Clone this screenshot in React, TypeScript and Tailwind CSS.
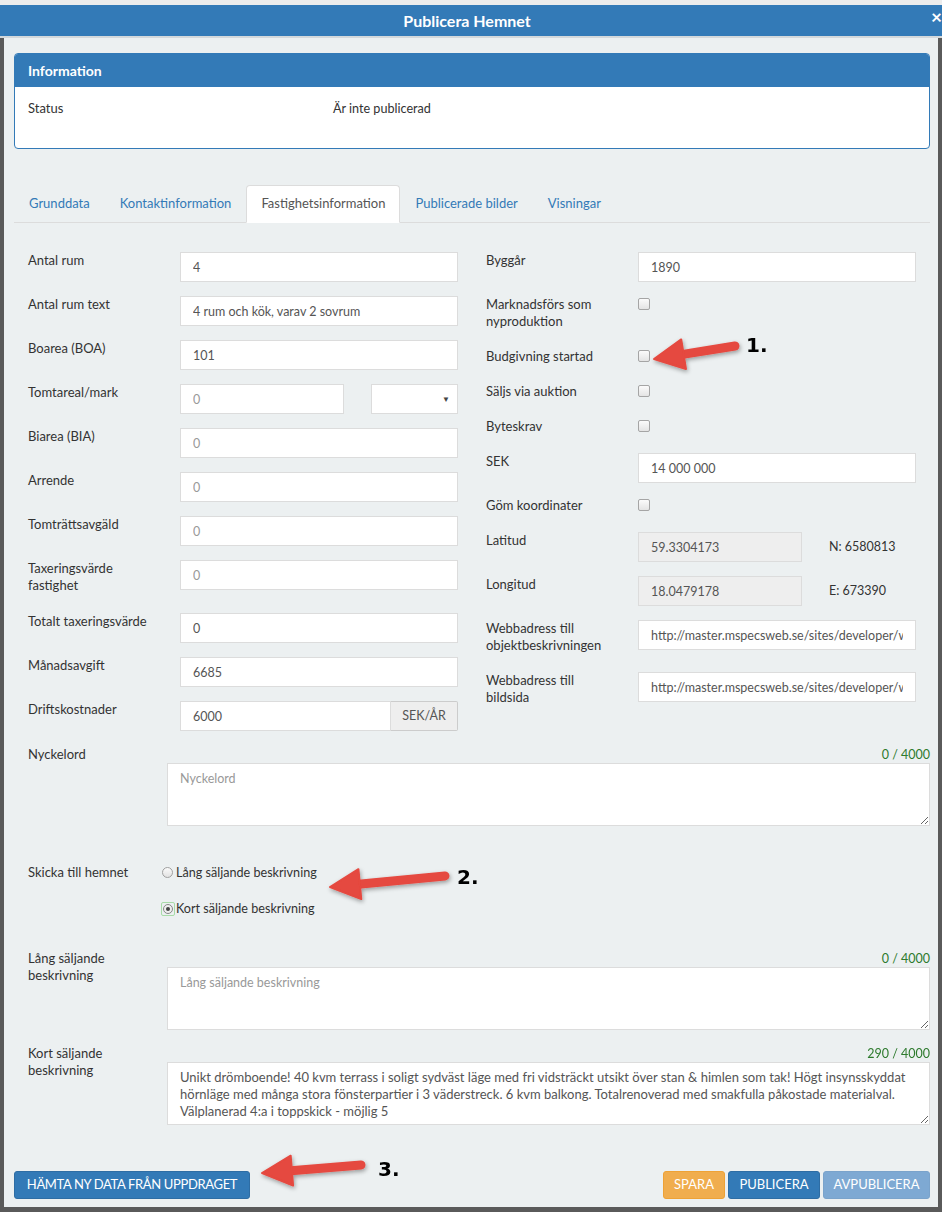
import React from 'react';

const lato = "font-['Lato','Liberation_Sans',sans-serif]";

function Field({ value, placeholder, gray }: { value?: string; placeholder?: string; gray?: boolean }) {
    return (
        <input
            readOnly
            value={value ?? ''}
            placeholder={placeholder}
            className={`block h-[30px] w-full border border-[#dcdcdc] px-[12px] text-[12.5px] text-[#555] outline-none placeholder:text-[#999] ${gray ? 'bg-[#eee]' : 'bg-white'}`}
        />
    );
}

function Row({ label, children, extra = '' }: { label: React.ReactNode; children: React.ReactNode; extra?: string }) {
    return (
        <div className="mb-[14px] flex">
            <div className={`w-[152px] shrink-0 leading-[17px] ${extra}`}>{label}</div>
            <div className="min-w-0 flex-1">{children}</div>
        </div>
    );
}

function Check() {
    return <span className="mt-[2px] block h-[12px] w-[12px] rounded-[2px] border border-[#a5a5a5] bg-linear-to-b from-[#fbfbfb] to-[#e4e4e4]" />;
}

function CheckRow({ label }: { label: React.ReactNode }) {
    return (
        <div className="mb-[18px] flex">
            <div className="w-[152px] shrink-0 leading-[17px]">{label}</div>
            <Check />
        </div>
    );
}

function Counter({ text }: { text: string }) {
    return <div className="h-[17px] text-right text-[12.5px] leading-[17px] text-[#2d7a2d]">{text}</div>;
}

function Area({ placeholder, value }: { placeholder?: string; value?: string }) {
    return (
        <textarea
            readOnly
            value={value ?? ''}
            placeholder={placeholder}
            className="block h-[63px] w-full resize-y border border-[#dcdcdc] bg-white px-[12px] py-[6px] text-[13px] leading-[17px] text-[#555] outline-none placeholder:text-[12.5px] placeholder:text-[#999]"
        />
    );
}

// red annotation arrow: tail -> tip
function Arrow({ x1, y1, x2, y2, label, lx, ly }: { x1: number; y1: number; x2: number; y2: number; label: string; lx: number; ly: number }) {
    const dx = x2 - x1;
    const dy = y2 - y1;
    const len = Math.hypot(dx, dy);
    const ux = dx / len;
    const uy = dy / len;
    const nx = -uy;
    const ny = ux;
    const head = 30;
    const hw = 15;
    const bx = x2 - ux * head;
    const by = y2 - uy * head;
    const pts = [
        [bx + nx * hw, by + ny * hw],
        [x2, y2],
        [bx - nx * hw, by - ny * hw],
    ]
        .map((p) => p.join(','))
        .join(' ');
    return (
        <g>
            <g filter="url(#shadow)">
                <line x1={x1} y1={y1} x2={bx + ux * 4} y2={by + uy * 4} stroke="#e5483f" strokeWidth={9} strokeLinecap="round" />
                <polygon points={pts} fill="#e5483f" stroke="#e5483f" strokeWidth={2} strokeLinejoin="round" />
            </g>
            <text x={lx} y={ly} fontFamily="DejaVu Sans, sans-serif" fontWeight="bold" fontSize={20} fill="#000">
                {label}
            </text>
        </g>
    );
}

export default function App() {
    const tabs = ['Grunddata', 'Kontaktinformation', 'Fastighetsinformation', 'Publicerade bilder', 'Visningar'];

    return (
        <div className={`relative h-[1212px] w-[942px] overflow-hidden bg-[#5a5a5a] text-[13px] text-[#333] ${lato}`}>
            <div className="h-[5px] bg-[#ececec]" />

            {/* Modal header */}
            <div className="relative flex h-[31px] items-center justify-center bg-[#337ab7] pr-[8px] text-[16px] font-bold text-white">
                Publicera Hemnet
                <span className="absolute right-0 top-[2px] text-[19px] leading-[20px] font-bold">×</span>
            </div>
            <div className="h-[2px] bg-[#d3d8db]" />

            {/* Modal body */}
            <div className="mx-[4px] h-[1169px] bg-[#ecf0f1] pl-[10px] pr-[8px] pt-[15px]">
                {/* Information panel */}
                <div className="overflow-hidden rounded-[4px] border border-[#337ab7] bg-white">
                    <div className="flex h-[33px] items-center bg-[#337ab7] px-[13px] pb-[1px] text-[14px] font-bold text-white">Information</div>
                    <div className="flex h-[61px] px-[13px] pt-[13px] leading-[17px]">
                        <div className="w-[305px]">Status</div>
                        <div className="text-[12.6px]">Är inte publicerad</div>
                    </div>
                </div>

                {/* Tabs */}
                <div className="mt-[36px] flex border-b border-[#dcdcdc]">
                    {tabs.map((t) =>
                        t === 'Fastighetsinformation' ? (
                            <div key={t} className="-mb-px rounded-t-[4px] border border-[#dcdcdc] border-b-white bg-white px-[14px] py-[9px] leading-[17px] text-[#555]">
                                {t}
                            </div>
                        ) : (
                            <div key={t} className="px-[15px] py-[10px] leading-[17px] text-[#337ab7]">
                                {t}
                            </div>
                        )
                    )}
                </div>

                {/* Two-column form */}
                <div className="mt-[29px] grid grid-cols-2 gap-x-[28px] px-[14px]">
                    <div>
                        <Row label="Antal rum"><Field value="4" /></Row>
                        <Row label="Antal rum text"><Field value="4 rum och kök, varav 2 sovrum" /></Row>
                        <Row label="Boarea (BOA)"><Field value="101" /></Row>
                        <Row label="Tomtareal/mark">
                            <div className="flex gap-[27px]">
                                <div className="w-[164px]"><Field placeholder="0" /></div>
                                <div className="relative h-[30px] flex-1 border border-[#dcdcdc] bg-white">
                                    <span className="absolute right-[7px] top-[8px] text-[8px] leading-[12px] text-[#444]">▼</span>
                                </div>
                            </div>
                        </Row>
                        <Row label="Biarea (BIA)"><Field placeholder="0" /></Row>
                        <Row label="Arrende"><Field placeholder="0" /></Row>
                        <Row label="Tomträttsavgäld"><Field placeholder="0" /></Row>
                        <Row label={<>Taxeringsvärde<br />fastighet</>} extra="pb-[5px]"><Field placeholder="0" /></Row>
                        <Row label="Totalt taxeringsvärde"><Field value="0" /></Row>
                        <Row label="Månadsavgift"><Field value="6685" /></Row>
                        <Row label="Driftskostnader">
                            <div className="flex">
                                <div className="flex-1"><Field value="6000" /></div>
                                <div className="flex h-[30px] w-[67px] items-center justify-center rounded-r-[2px] border border-l-0 border-[#ccc] bg-[#eee] text-[12.5px] text-[#555]">SEK/ÅR</div>
                            </div>
                        </Row>
                    </div>

                    <div>
                        <Row label="Byggår"><Field value="1890" /></Row>
                        <CheckRow label={<>Marknadsförs som<br />nyproduktion</>} />
                        <CheckRow label="Budgivning startad" />
                        <CheckRow label="Säljs via auktion" />
                        <CheckRow label="Byteskrav" />
                        <Row label="SEK"><Field value="14 000 000" /></Row>
                        <CheckRow label="Göm koordinater" />
                        <Row label="Latitud">
                            <div className="flex gap-[27px]">
                                <div className="w-[164px]"><Field value="59.3304173" gray /></div>
                                <div className="pt-[6px] text-[12.5px] leading-[17px]">N: 6580813</div>
                            </div>
                        </Row>
                        <Row label="Longitud">
                            <div className="flex gap-[27px]">
                                <div className="w-[164px]"><Field value="18.0479178" gray /></div>
                                <div className="pt-[6px] text-[12.5px] leading-[17px]">E: 673390</div>
                            </div>
                        </Row>
                        <Row label={<>Webbadress till<br />objektbeskrivningen</>} extra="pb-[4px]">
                            <Field value="http://master.mspecsweb.se/sites/developer/web/objekt/1234567" />
                        </Row>
                        <Row label={<>Webbadress till<br />bildsida</>}>
                            <Field value="http://master.mspecsweb.se/sites/developer/web/bilder/1234567" />
                        </Row>
                    </div>
                </div>

                {/* Text areas */}
                <div className="pl-[14px]">
                    <div className="mt-[1px] flex">
                        <div className="w-[139px] shrink-0 leading-[17px]">Nyckelord</div>
                        <div className="flex-1">
                            <Counter text="0 / 4000" />
                            <Area placeholder="Nyckelord" />
                        </div>
                    </div>

                    <div className="mt-[38px] flex">
                        <div className="w-[134px] shrink-0 leading-[17px]">Skicka till hemnet</div>
                        <div className="flex flex-col gap-[19px] text-[12.6px]">
                            <div className="flex items-center leading-[17px]">
                                <span className="mr-[3px] block h-[11px] w-[11px] rounded-full border border-[#a0a0a0] bg-linear-to-b from-[#fafafa] to-[#e2e2e2]" />
                                Lång säljande beskrivning
                            </div>
                            <div className="flex items-center leading-[17px]">
                                <span className="mr-[1px] -ml-[1px] flex h-[14px] w-[14px] items-center justify-center rounded-[2px] border border-[#a8dba8]">
                                    <span className="flex h-[10px] w-[10px] items-center justify-center rounded-full border border-[#888] bg-[#eee]">
                                        <span className="block h-[4px] w-[4px] rounded-full bg-[#444]" />
                                    </span>
                                </span>
                                Kort säljande beskrivning
                            </div>
                        </div>
                    </div>

                    <div className="mt-[33px] flex">
                        <div className="w-[139px] shrink-0 leading-[17px]">Lång säljande<br />beskrivning</div>
                        <div className="flex-1">
                            <Counter text="0 / 4000" />
                            <Area placeholder="Lång säljande beskrivning" />
                        </div>
                    </div>

                    <div className="mt-[15px] flex">
                        <div className="w-[139px] shrink-0 leading-[17px]">Kort säljande<br />beskrivning</div>
                        <div className="flex-1">
                            <Counter text="290 / 4000" />
                            <Area
                                value={
                                    'Unikt drömboende! 40 kvm terrass i soligt sydväst läge med fri vidsträckt utsikt över stan & himlen som tak! Högt insynsskyddat\nhörnläge med många stora fönsterpartier i 3 väderstreck. 6 kvm balkong. Totalrenoverad med smakfulla påkostade materialval.\nVälplanerad 4:a i toppskick - möjlig 5'
                                }
                            />
                        </div>
                    </div>
                </div>

                {/* Footer buttons */}
                <div className="mt-[46px] flex items-center justify-between">
                    <button className="h-[28px] w-[236px] rounded-[3px] border border-[#2e6da4] bg-[#337ab7] text-[13px] tracking-[-0.35px] text-white">
                        HÄMTA NY DATA FRÅN UPPDRAGET
                    </button>
                    <div className="flex gap-[3px]">
                        <button className="h-[28px] w-[62px] rounded-[3px] border border-[#eea236] bg-[#f0ad4e] text-[13px] text-white">SPARA</button>
                        <button className="h-[28px] w-[92px] rounded-[3px] border border-[#2e6da4] bg-[#337ab7] text-[13px] text-white">PUBLICERA</button>
                        <button className="h-[28px] w-[107px] rounded-[3px] border border-[#7aa3cb] bg-[#7ea9d3] text-[13px] text-white">AVPUBLICERA</button>
                    </div>
                </div>
            </div>

            {/* Annotation arrows */}
            <svg className="pointer-events-none absolute left-0 top-0" width={942} height={1212}>
                <defs>
                    <filter id="shadow" x="-20%" y="-50%" width="140%" height="200%">
                        <feDropShadow dx="1" dy="2" stdDeviation="2" floodColor="#000" floodOpacity="0.35" />
                    </filter>
                </defs>
                <Arrow x1={735} y1={346} x2={654} y2={359} label="1." lx={746} ly={352} />
                <Arrow x1={445} y1={876} x2={330} y2={887} label="2." lx={457} ly={884} />
                <Arrow x1={361} y1={1165} x2={262} y2={1173} label="3." lx={378} ly={1176} />
            </svg>
        </div>
    );
}
